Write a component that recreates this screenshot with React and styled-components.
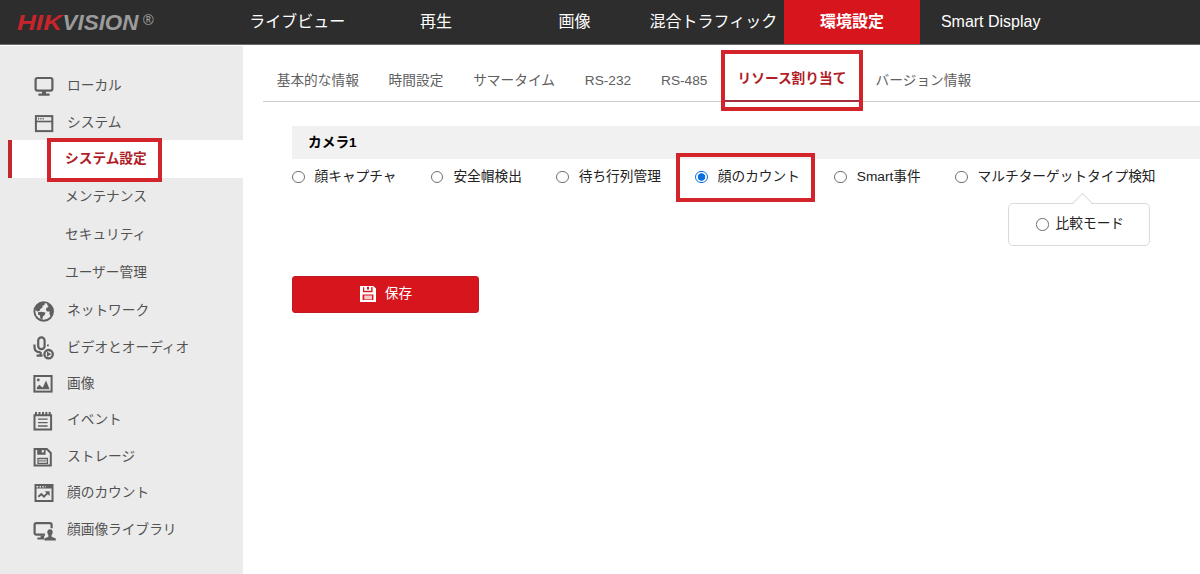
import React, { useState } from 'react'
import styled, { createGlobalStyle, css } from 'styled-components'

const red = '#d7151d'
const darkRed = '#b01e28'
const iconGrey = '#5f5f5f'

const topNav = ['ライブビュー', '再生', '画像', '混合トラフィック', '環境設定', 'Smart Display']

const tabs = ['基本的な情報', '時間設定', 'サマータイム', 'RS-232', 'RS-485', 'リソース割り当て', 'バージョン情報']

const modes = ['顔キャプチャ', '安全帽検出', '待ち行列管理', '顔のカウント', 'Smart事件', 'マルチターゲットタイプ検知']

const systemPages = ['システム設定', 'メンテナンス', 'セキュリティ', 'ユーザー管理']

const MonitorIcon = () => (
    <Icon>
        <rect x='3.6' y='5' width='16.8' height='12.6' rx='1.8' fill='none' stroke={iconGrey} strokeWidth='2.2' />
        <path d='M10 18h4v2.4h3.6v2.4H6.4v-2.4H10z' />
    </Icon>
)

const WindowIcon = () => (
    <Icon>
        <rect x='3.9' y='6.1' width='16.4' height='15' fill='none' stroke={iconGrey} strokeWidth='2' />
        <path d='M4 10.7h16v1.6H4z' />
        <path d='M6 8.1h1.2v1.3H6zM8.3 8.1h1.2v1.3H8.3zM10.6 8.1h1.2v1.3h-1.2z' />
    </Icon>
)

// mostly dark sphere with light continents
const GlobeIcon = () => (
    <Icon>
        <circle cx='11.7' cy='13.4' r='9.3' fill='none' stroke={iconGrey} strokeWidth='1.9' />
        <path d='M3 10.5C4.2 6.6 7.2 4.3 11 4l2 .8-.6 2.2-2 .8.2 1.8-2 1.2-1.2 2.2-2 .6L4 12.4z' />
        <path d='M6 14.2l3.4-.4 4 .8-.6 2.4-1.800 1.200-.6 3-2-.4-.4-3.200-2-1z' />
        <path d='M15 5.400l3.400 1.800 2.200 3.600.4 3-.8 3.400-2 .8-.8-2.600.4-2-2.600.2-1.400-1.800.8-2 2-.8-1-1.400z' />
    </Icon>
)

const MicIcon = () => (
    <Icon>
        <rect x='6.2' y='2.3' width='6.4' height='11.8' rx='3.2' fill='none' stroke={iconGrey} strokeWidth='2.2' />
        <path d='M2.5 9.6v2.6c0 3.2 2.4 5 6 5M8.6 17v3.2M4.6 20.6h6' fill='none' stroke={iconGrey} strokeWidth='2.2' />
        <path d='M15 9.4h1.8v1.9H15z' />
        <circle cx='16.6' cy='19.2' r='4.2' fill='none' stroke={iconGrey} strokeWidth='2.3' />
        <path d='M15 16.6l4.2 2.6-4.2 2.6z' />
    </Icon>
)

const PictureIcon = () => (
    <Icon>
        <rect x='2.4' y='5' width='17.2' height='15.6' fill='none' stroke={iconGrey} strokeWidth='2' />
        <path d='M4.8 18.2v-1.6l2.6-2.8 2.4 2.2 1 .4 3.2-6.800 3.600 8.600z' />
        <circle cx='6.3' cy='9' r='1.4' />
    </Icon>
)

const NotesIcon = () => (
    <Icon>
        <path d='M2.5 8.2h16.6v14.4H2.5z' fill='none' stroke={iconGrey} strokeWidth='2' />
        <path d='M3 5h2v3H3zM6.5 5h2v3h-2zM10 5h2v3h-2zM13.3 5h2v3h-2zM16.7 5h2v3h-2z' />
        <path d='M6 12.1h9.6M6 15.6h9.6M6 19h9.6' stroke={iconGrey} strokeWidth='1.3' />
    </Icon>
)

const DiskIcon = () => (
    <Icon>
        <path d='M2.6 5h12.2l4 4v12.6H2.6z' fill='none' stroke={iconGrey} strokeWidth='2' />
        <path d='M5.2 4.6h4.6v3.8h2V4.6h1.8v6.2H5.2z' />
        <path d='M6 14.5h9.4v4.8H6z' fill='none' stroke={iconGrey} strokeWidth='1.3' />
        <path d='M7 16.9h7.4' stroke={iconGrey} />
    </Icon>
)

const ChartIcon = () => (
    <Icon>
        <rect x='3.5' y='5' width='17' height='16' fill='none' stroke={iconGrey} strokeWidth='2' />
        <path d='M13.6 4.4h7v4.2h-7zM4 7.6h16v1H4zM6.2 5h1.4v3H6.2zM9 5h1.4v3H9zM11.7 5h1.2v3h-1.2z' />
        <path d='M6.4 16.8l3-2.8 2.6 2.6 4-4' fill='none' stroke={iconGrey} strokeWidth='1.9' />
        <path d='M12.8 11.2h4.8V16z' />
    </Icon>
)

const FaceLibraryIcon = () => (
    <Icon>
        <path d='M13 17.6H4.4c-1 0-1.8-.7-1.8-1.7V7.8c0-1 .8-1.7 1.8-1.7h13.4c1 0 1.8.7 1.8 1.7v3.4' fill='none' stroke={iconGrey} strokeWidth='2.2' />
        <path d='M8.6 18.4h3.6v4H5.4v-1.8h3.2z' />
        <path d='M18 12.2c1.6 0 2.7 1.1 2.7 2.8 0 1.4-.6 2.3-1.1 3v1.8l4.2 1.6v2.2H12.4v-2.2l4-1.6V18c-.6-.7-1.1-1.6-1.1-3 0-1.7 1.1-2.8 2.7-2.8z' />
    </Icon>
)

const SaveIcon = () => (
    <svg width='16' height='16' viewBox='0 0 16 16'>
        <path d='M0 0h13.4L16 2.6V16H0z' fill='#fff' />
        <path d='M3 1.2h9.6v5H3z' fill={red} />
        <path d='M4.2 0h7v4.8h-7z' fill='#fff' />
        <path d='M7 .8h2v2.6H7zM2.6 8.6h10.8V14H2.6z' fill={red} />
        <path d='M4.2 9.5h7.8v3.9H4.2z' fill='#f7c9cb' />
    </svg>
)

export default function App() {
    const [mode, setMode] = useState('顔のカウント')

    return (
        <>
            <GlobalStyle />
            <Header>
                <Logo viewBox='0 0 140 20' aria-label='HIKVISION'>
                    <text x='0' y='18' fill='#c8242b' textLength='45' lengthAdjust='spacingAndGlyphs'>HIK</text>
                    <text x='45.5' y='18' fill='#9b9b9b' textLength='76' lengthAdjust='spacingAndGlyphs'>VISION</text>
                    <text x='125.5' y='12.5' fill='#9b9b9b' className='mark'>®</text>
                </Logo>
                <TopNav>
                    {topNav.map((item) => (
                        <TopItem key={item} $active={item === '環境設定'}>{item}</TopItem>
                    ))}
                </TopNav>
            </Header>
            <Body>
                <Sidebar>
                    <MenuItem><MonitorIcon /><span>ローカル</span></MenuItem>
                    <MenuItem><WindowIcon /><span>システム</span></MenuItem>
                    <ul>
                        {systemPages.map((page, i) => (
                            <SubItem key={page} $active={i === 0}>
                                <span>{page}</span>
                                {i === 0 && <Marker $box='-2px auto auto 39px' $w={115} $h={44} />}
                            </SubItem>
                        ))}
                    </ul>
                    <MenuItem><GlobeIcon /><span>ネットワーク</span></MenuItem>
                    <MenuItem><MicIcon /><span>ビデオとオーディオ</span></MenuItem>
                    <MenuItem><PictureIcon /><span>画像</span></MenuItem>
                    <MenuItem><NotesIcon /><span>イベント</span></MenuItem>
                    <MenuItem><DiskIcon /><span>ストレージ</span></MenuItem>
                    <MenuItem><ChartIcon /><span>顔のカウント</span></MenuItem>
                    <MenuItem><FaceLibraryIcon /><span>顔画像ライブラリ</span></MenuItem>
                </Sidebar>
                <Main>
                    <Tabs>
                        {tabs.map((tab) => {
                            const active = tab === 'リソース割り当て'
                            return (
                                <Tab key={tab} $active={active}>
                                    <span>{tab}</span>
                                    {active && <Marker $box='5px auto auto -1px' $w={142} $h={61} />}
                                </Tab>
                            )
                        })}
                    </Tabs>
                    <Panel>
                        <PanelTitle>カメラ1</PanelTitle>
                        <Modes>
                            {modes.map((name) => (
                                <Mode key={name}>
                                    <Radio type='radio' name='mode' checked={mode === name} onChange={() => setMode(name)} />
                                    <span>{name}</span>
                                    {name === '顔のカウント' && <Marker $box='-6px auto auto -19px' $w={139} $h={49} />}
                                    {name === 'マルチターゲットタイプ検知' && (
                                        <Popup>
                                            <Radio type='radio' name='compare' />
                                            <span>比較モード</span>
                                        </Popup>
                                    )}
                                </Mode>
                            ))}
                        </Modes>
                        <SaveButton><SaveIcon /><span>保存</span></SaveButton>
                    </Panel>
                </Main>
            </Body>
        </>
    )
}

const GlobalStyle = createGlobalStyle`
    * {
        box-sizing: border-box;
    }

    body {
        margin: 0;
        background: #fff;
        overflow: hidden;
        font-family: "Liberation Sans", "Noto Sans CJK JP", sans-serif;
        font-size: 13.7px;
        line-height: 20px;
        color: #222;
    }

    ul {
        margin: 0;
        padding: 0;
        list-style: none;
    }
`

const Icon = styled.svg.attrs({ viewBox: '0 0 24 24' })`
    width: 24px;
    height: 24px;
    flex: none;
    fill: ${iconGrey};
    overflow: visible;
`

const Marker = styled.i`
    position: absolute;
    inset: ${(p) => p.$box};
    width: ${(p) => p.$w}px;
    height: ${(p) => p.$h}px;
    border: 4px solid #d3232b;
    pointer-events: none;
    z-index: 1;
`

const Header = styled.header`
    display: flex;
    height: 45px;
    background: #2d2d2d;
    border-bottom: 1px solid #6b6b6b;
`

const Logo = styled.svg`
    width: 140px;
    height: 20px;
    margin: 12px 72px 0 17px;
    overflow: visible;

    text {
        font-family: "Liberation Sans", sans-serif;
        font-size: 22.5px;
        font-style: italic;
        font-weight: 700;
    }

    .mark {
        font-family: "Open Sans", sans-serif;
        font-size: 14px;
        font-weight: 400;
    }
`

const TopNav = styled.nav`
    display: flex;
    gap: 2.2px;
`

const TopItem = styled.div`
    width: 136.5px;
    height: 44px;
    line-height: 43px;
    text-align: center;
    white-space: nowrap;
    font-size: 16px;
    color: #fff;

    ${(p) => p.$active && css`
        background: ${red};
        font-weight: 700;
    `}
`

const Body = styled.div`
    display: flex;
    height: 529px;
`

const Sidebar = styled.aside`
    width: 243px;
    flex: none;
    padding-top: 21.2px;
    margin-top: 1px;
    background: #ebebeb;
    color: #525252;
`

const MenuItem = styled.div`
    display: flex;
    align-items: center;
    gap: 11px;
    height: 36.4px;
    padding-left: 32px;

    span {
        margin-top: 2px;
    }
`

const SubItem = styled.li`
    position: relative;
    height: 38px;
    margin-left: 8px;
    padding-left: 57px;
    line-height: 38px;

    ${(p) => p.$active && css`
        padding-left: 53px;
        border-left: 4px solid #c1272d;
        background: #fff;
        color: ${darkRed};
        font-weight: 700;

        i {
            margin-left: -4px;
        }
    `}
`

const Main = styled.main`
    flex: 1;
    min-width: 0;
    padding-left: 20px;
`

const Tabs = styled.nav`
    display: flex;
    height: 57px;
    border-bottom: 1px solid #cfcfcf;
`

const Tab = styled.div`
    position: relative;
    height: 57px;
    padding: 26px 14.9px 0;
    white-space: nowrap;
    color: #606060;

    &:first-child {
        padding-left: 13.7px;
    }

    ${(p) => p.$active && css`
        padding: 24px 14.4px 0 15.2px;
        border-bottom: 2px solid #a3303c;
        color: ${darkRed};
        font-weight: 700;
    `}
`

const Panel = styled.section`
    padding: 24px 0 0 29px;
`

const PanelTitle = styled.h2`
    margin: 0;
    height: 33px;
    padding-left: 16px;
    line-height: 33px;
    font-size: 13.7px;
    font-weight: 700;
    color: #000;
    background: #f1f1f1;
`

const Modes = styled.div`
    display: flex;
    gap: 34.4px;
    height: 117px;
`

const Mode = styled.label`
    position: relative;
    display: flex;
    align-items: center;
    gap: 10px;
    height: 36px;
    white-space: nowrap;

    > span {
        margin-top: -1px;
    }
`

const Radio = styled.input`
    appearance: none;
    flex: none;
    width: 12.5px;
    height: 12.5px;
    margin: 0;
    border: 1px solid #6f6f6f;
    border-radius: 50%;
    background: #fff;

    &:checked {
        border-color: #0b70e0;
        background: radial-gradient(circle, #0b70e0 3.4px, #fff 4.1px);
    }
`

const Popup = styled.div`
    position: absolute;
    top: 44px;
    left: 53px;
    display: flex;
    align-items: center;
    gap: 7px;
    width: 142px;
    height: 43px;
    padding-left: 27px;
    border: 1px solid #dadada;
    border-radius: 5px;
    background: #fff;

    span {
        margin-top: -2px;
    }

    &::before {
        content: '';
        position: absolute;
        top: -8px;
        left: 66px;
        width: 14px;
        height: 14px;
        border: solid #dadada;
        border-width: 1px 0 0 1px;
        background: linear-gradient(135deg, #fff 50%, transparent 50%);
        transform: rotate(45deg);
    }
`

const SaveButton = styled.button`
    display: flex;
    align-items: center;
    justify-content: center;
    gap: 9px;
    width: 187px;
    height: 37px;
    padding: 0 0 1px 1px;
    border: 1px solid #bf1a22;
    border-radius: 3px;
    background: ${red};
    color: #fff;
    font: inherit;
`
